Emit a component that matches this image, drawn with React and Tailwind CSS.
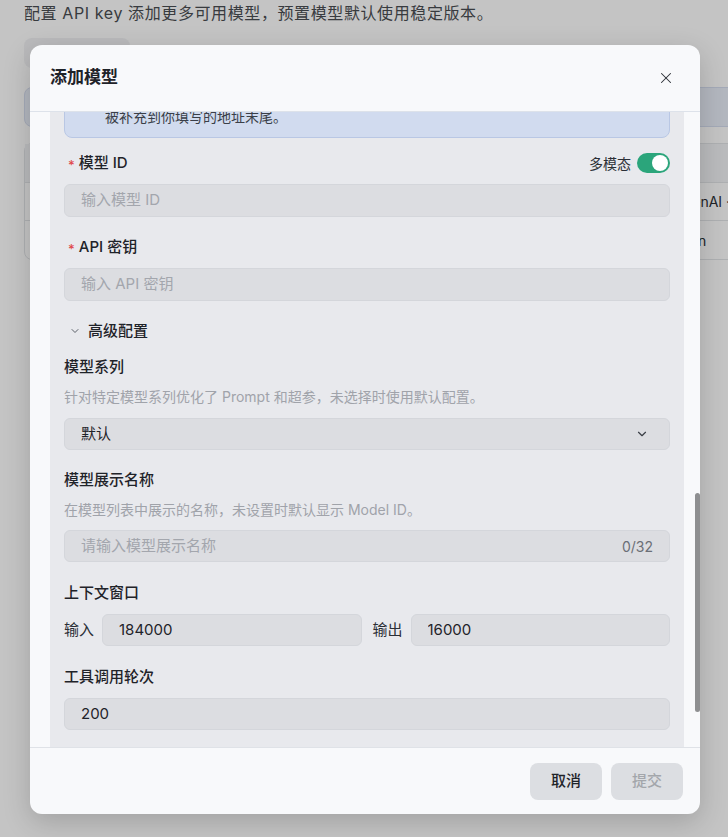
import React, { useLayoutEffect, useRef } from "react";
import { X, ChevronDown, Info } from "lucide-react";

const fontStack = "font-['Inter','Noto_Sans_CJK_SC',sans-serif]";

// Label row for a form field, with optional red required mark
function FieldLabel({ required, children, right }) {
  return (
    <div className="flex h-5 items-center justify-between">
      <div className="flex items-center text-[15px] font-medium text-[#1f2329]">
        {required && (
          <span className="ml-1 mr-[4px] pt-[5px] text-[13px] leading-none text-[#e0484a]">*</span>
        )}
        {children}
      </div>
      {right}
    </div>
  );
}

function Hint({ children }) {
  return <p className="mt-[11px] text-[14px] leading-[18px] text-[#a0a3aa]">{children}</p>;
}

function TextInput({ placeholder, value, tall, suffix, className = "" }) {
  return (
    <div
      className={`flex items-center rounded-md border border-[#d4d6db] bg-[#dcdde1] px-4 ${
        tall ? "h-[33px]" : "h-8"
      } ${className}`}
    >
      <input
        readOnly
        defaultValue={value}
        placeholder={placeholder}
        className="min-w-0 flex-1 bg-transparent text-[15px] text-[#1f2329] outline-none placeholder:text-[#a3a6ad]"
      />
      {suffix && <span className="ml-2 text-[14px] text-[#6b6f76]">{suffix}</span>}
    </div>
  );
}

function Toggle({ on }) {
  return (
    <div
      className={`flex h-5 w-[33px] items-center rounded-full px-[2px] ${
        on ? "justify-end bg-[#2ba57b]" : "justify-start bg-[#c9ccd1]"
      }`}
    >
      <div className="h-4 w-4 rounded-full bg-white" />
    </div>
  );
}

function AddModelDialog() {
  const scrollRef = useRef(null);
  const noticeRef = useRef(null);

  // keep the form scrolled to the model fields
  useLayoutEffect(() => {
    const el = scrollRef.current;
    const box = noticeRef.current;
    if (el && box) el.scrollTop = box.offsetTop + box.offsetHeight - 26;
  }, []);

  return (
    <div className="absolute left-[30px] top-[45px] flex h-[769px] w-[670px] flex-col overflow-hidden rounded-xl bg-[#f8f9fb] shadow-[0_8px_28px_rgba(0,0,0,0.18)]">
      {/* header */}
      <div className="flex h-[67px] shrink-0 items-center justify-between border-b border-[#dde2ea] pl-5 pr-[25px]">
        <h2 className="text-[17px] font-semibold text-[#1f2329]">添加模型</h2>
        <X size={18} strokeWidth={1.4} className="text-[#2b2f36]" />
      </div>

      {/* body */}
      <div
        ref={scrollRef}
        className="relative min-h-0 flex-1 overflow-y-auto pl-5 pr-4 [scrollbar-width:none]"
      >
        <div className="bg-[#e8e9ed] px-[14px] pb-6 pt-4">
          <FieldLabel required>服务商</FieldLabel>
          <div className="mt-[11px] flex h-8 items-center justify-between rounded-md border border-[#d4d6db] bg-[#dcdde1] px-4 text-[15px] text-[#1f2329]">
            <span>OpenAI 兼容</span>
            <ChevronDown size={14} className="text-[#4b4f56]" />
          </div>

          <div className="mt-5">
            <FieldLabel required>API 地址</FieldLabel>
          </div>
          <TextInput tall className="mt-[11px]" placeholder="https://api.example.com/v1" />

          <div
            ref={noticeRef}
            className="mt-3 flex rounded-lg border border-[#b9c7e4] bg-[#d1dbef] pb-[10px] pl-4 pr-4 pt-[10px]"
          >
            <Info size={14} className="mr-[10px] mt-[3px] shrink-0 text-[#3f63b8]" />
            <p className="text-[14px] leading-5 text-[#3a3f48]">
              地址需以 /v1 结尾，常见的接口路径（例如 /chat/completions）会
              <br />
              被补充到你填写的地址末尾。
            </p>
          </div>

          <div className="mt-[15px]">
            <FieldLabel
              required
              right={
                <div className="flex items-center gap-[6px]">
                  <span className="text-[14px] text-[#2b2f36]">多模态</span>
                  <Toggle on />
                </div>
              }
            >
              模型 ID
            </FieldLabel>
          </div>
          <TextInput tall className="mt-[11px]" placeholder="输入模型 ID" />

          <div className="mt-5">
            <FieldLabel required>API 密钥</FieldLabel>
          </div>
          <TextInput tall className="mt-[11px]" placeholder="输入 API 密钥" />

          <button className="mt-5 flex h-5 items-center gap-[7px] pl-[5px] text-[15px] font-medium text-[#1f2329]">
            <ChevronDown size={12} strokeWidth={2} className="text-[#5b6068]" />
            高级配置
          </button>

          <div className="mt-4">
            <FieldLabel>模型系列</FieldLabel>
          </div>
          <Hint>针对特定模型系列优化了 Prompt 和超参，未选择时使用默认配置。</Hint>
          <div className="mt-3 flex h-8 items-center justify-between rounded-md border border-[#d4d6db] bg-[#dcdde1] pl-4 pr-5 text-[15px] text-[#1f2329]">
            <span>默认</span>
            <ChevronDown size={14} strokeWidth={2} className="text-[#3a3e45]" />
          </div>

          <div className="mt-5">
            <FieldLabel>模型展示名称</FieldLabel>
          </div>
          <Hint>在模型列表中展示的名称，未设置时默认显示 Model ID。</Hint>
          <TextInput className="mt-[11px]" placeholder="请输入模型展示名称" suffix="0/32" />

          <div className="mt-[21px]">
            <FieldLabel>上下文窗口</FieldLabel>
          </div>
          <div className="mt-[11px] flex items-center">
            <span className="w-[38px] shrink-0 whitespace-nowrap text-[15px] text-[#2b2f36]">输入</span>
            <TextInput className="min-w-0 flex-1" value="184000" />
            <span className="ml-[11px] w-[38px] shrink-0 whitespace-nowrap text-[15px] text-[#2b2f36]">输出</span>
            <TextInput className="min-w-0 flex-1" value="16000" />
          </div>

          <div className="mt-[21px]">
            <FieldLabel>工具调用轮次</FieldLabel>
          </div>
          <TextInput className="mt-[11px]" value="200" />
        </div>
      </div>

      {/* scroll thumb */}
      <div className="absolute right-0 top-[448px] h-[219px] w-[5px] rounded-full bg-[#8e8f91]" />

      {/* footer */}
      <div className="flex h-[67px] shrink-0 items-start justify-end gap-[9px] border-t border-[#dfe2e7] pr-[17px] pt-[15px]">
        <button className="h-[37px] w-[72px] rounded-lg bg-[#dcdee2] text-[15px] font-medium text-[#1f2329]">
          取消
        </button>
        <button className="h-[37px] w-[72px] rounded-lg bg-[#dcdee2] text-[15px] font-medium text-[#a3a6ab]">
          提交
        </button>
      </div>
    </div>
  );
}

export default function App() {
  return (
    <div className={`relative h-[837px] w-[728px] overflow-hidden bg-white ${fontStack}`}>
      {/* settings page underneath */}
      <div className="px-6">
        <p className="pt-[3px] text-[16px] leading-5 tracking-[0.6px] text-[#4a4d52]">
          配置 API key 添加更多可用模型，预置模型默认使用稳定版本。
        </p>
        <div className="mt-[15px] h-[30px] w-[106px] rounded-lg bg-[#f2f3f5]" />
        <div className="mt-[19px] h-[40px] w-[760px] rounded-lg border border-[#d6def0] bg-[#e9eef9]" />
        <div className="mt-4 w-[760px] rounded-lg border border-[#e3e5e8] text-[14px] text-[#2b2f36]">
          <div className="h-[39px] border-b border-[#e3e5e8] bg-[#f3f4f6]" />
          <div className="flex h-[38px] items-center border-b border-[#e3e5e8] pl-[648px]">OpenAI · GPT</div>
          <div className="flex h-[38px] items-center pl-[648px]">Titan</div>
        </div>
      </div>

      {/* modal backdrop */}
      <div className="absolute inset-0 bg-black/[0.23]" />
      <AddModelDialog />
    </div>
  );
}
